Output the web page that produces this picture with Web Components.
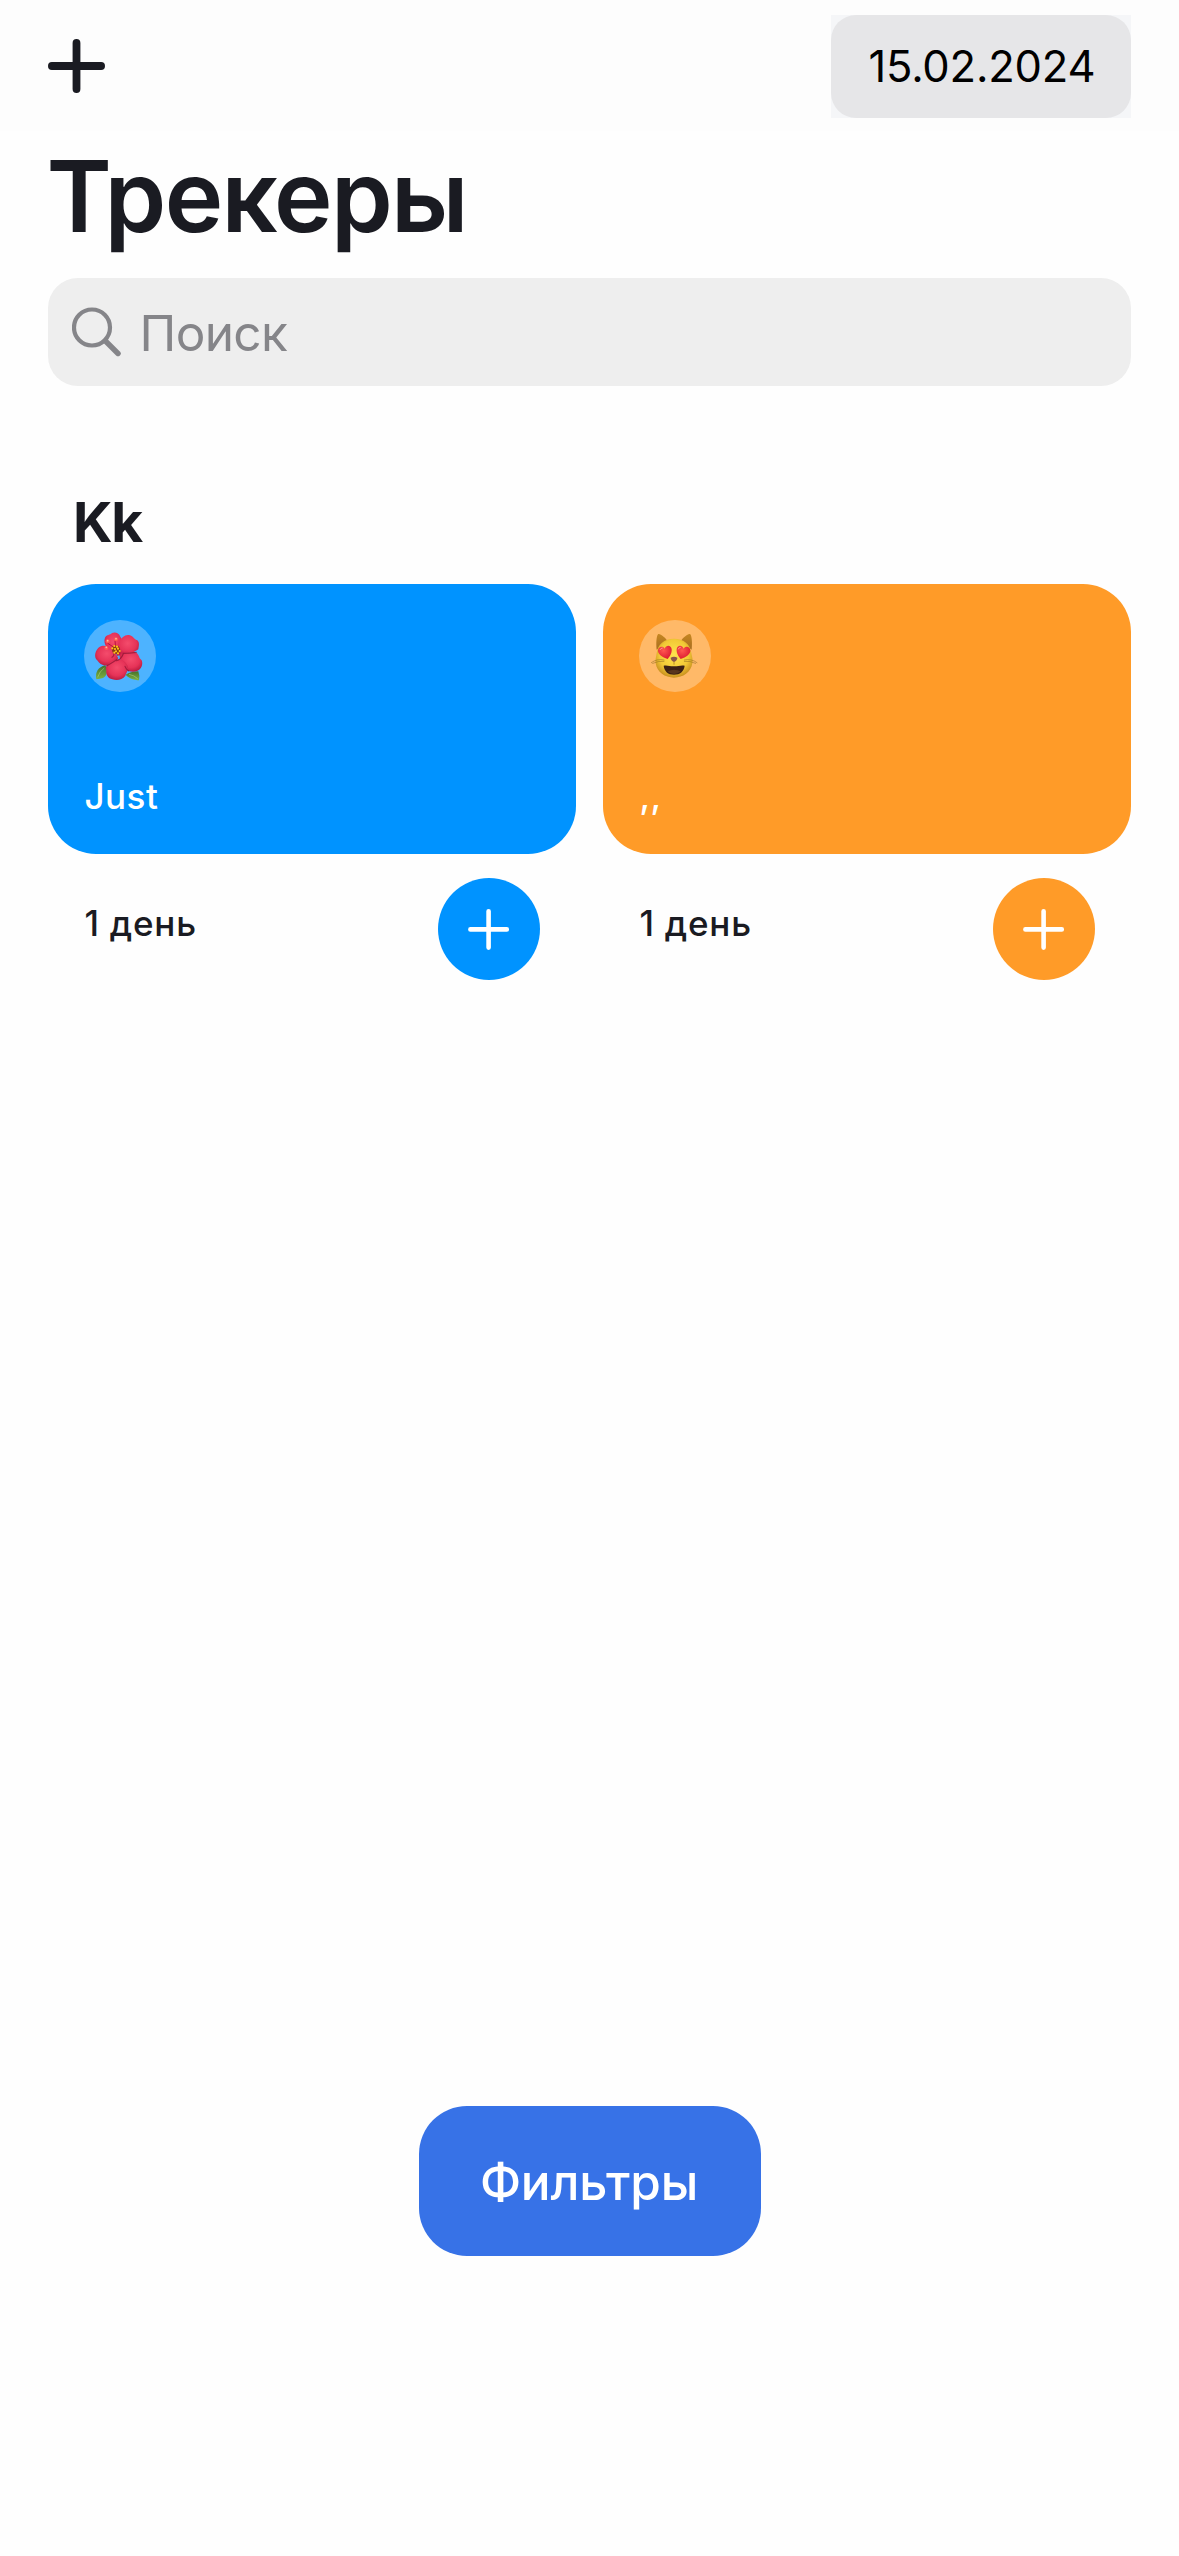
<!DOCTYPE html>
<html lang="ru">
<head>
<meta charset="utf-8">
<title>Трекеры</title>
<style>
html, body { margin: 0; background: #fefefe; }
body { font-family: Inter, "Noto Sans", sans-serif; color: #1a1b22; }
</style>
</head>
<body>
<tracker-app></tracker-app>
<script>
const define = (name, html) => customElements.define(name, class extends HTMLElement {
  constructor() {
    super();
    this.attachShadow({ mode: 'open' }).innerHTML = html;
  }
});

define('nav-bar', `
<style>
:host { display: flex; justify-content: space-between; align-items: flex-start; box-sizing: border-box; height: 131px; padding: 15px 48px 0; background: #fdfdfd; }
svg { display: block; margin-top: 24px; }
.date { background: #f5f6f8; }
.pill { display: flex; align-items: center; justify-content: center; box-sizing: border-box; width: 300px; height: 103px; padding: 0 0 1px 2px; border-radius: 25px; background: #e6e6e8; color: #000; font-size: 43.5px; letter-spacing: -.2px; }
</style>
<svg width="57" height="54" viewBox="0 0 57 54" fill="none" stroke="#1a1b22" stroke-width="7.8" stroke-linecap="round"><path d="M3.9 27H53.1M28.5 3.9V50.1"/></svg>
<div class="date"><div class="pill"><slot></slot></div></div>`);

define('search-field', `
<style>
:host { display: flex; align-items: center; box-sizing: border-box; height: 108px; margin: 22px 48px 0; padding-left: 24px; border-radius: 30px; background: #eeeeee; color: #858589; font-size: 49.5px; letter-spacing: -.65px; }
svg { display: block; margin-right: 18.5px; }
span { padding-top: 1px; }
</style>
<svg width="49" height="50" viewBox="0 0 49 50" fill="none" stroke="#858589" stroke-linecap="round"><circle cx="20" cy="20.5" r="18" stroke-width="4.2"/><path d="M33.5 34L46 46.5" stroke-width="5.4"/></svg>
<span><slot></slot></span>`);

define('emoji-hibiscus', `
<style>:host, svg { display: block; width: 72px; height: 72px; }</style>
<svg viewBox="27 30 216 216" role="img">
<defs>
<radialGradient id="p" cx=".5" cy=".4" r=".6"><stop offset="0" stop-color="#f44c6c"/><stop offset=".65" stop-color="#e63358"/><stop offset="1" stop-color="#bd1c40"/></radialGradient>
<linearGradient id="l" x1="0" y1="0" x2="0" y2="1"><stop offset="0" stop-color="#47702b"/><stop offset="1" stop-color="#7cb342"/></linearGradient>
</defs>
<path d="M64 208C60 187 69 171 91 166C99 181 96 199 84 204Q74 206 64 208Z" fill="url(#l)"/>
<path d="M68 202Q73 184 88 174" fill="none" stroke="#a6ca75" stroke-width="2"/>
<path d="M152 194C164 186 178 184 190 184Q195 198 192 211C178 209 163 207 152 194Z" fill="url(#l)"/>
<path d="M162 193Q178 196 188 206" fill="none" stroke="#a6ca75" stroke-width="2"/>
<path d="M120 136C98 121 83 101 90 83C96 73 105 76 111 69C121 65 131 69 136 80C146 92 142 118 120 136Z" fill="url(#p)"/>
<path d="M125 138C122 106 137 76 159 75C171 73 175 86 187 91C195 98 191 110 190 118C176 130 148 133 125 138Z" fill="url(#p)"/>
<path d="M130 144C114 167 96 170 82 164C73 161 69 153 63 147C56 134 64 113 80 108C96 104 114 117 130 144Z" fill="url(#p)"/>
<path d="M133 134C149 121 173 120 186 130C194 139 191 143 200 151C205 162 199 179 186 183C174 188 158 184 149 177C141 162 134 150 133 134Z" fill="url(#p)"/>
<path d="M127 148C140 147 151 154 157 166C163 177 155 187 151 197C142 209 127 213 112 208C99 206 92 194 94 181C87 167 106 153 127 148Z" fill="url(#p)"/>
<path d="M124 152Q138 149 145 131M144 130Q164 130 184 127M96 167Q113 157 125 149M150 169Q153 178 161 183M116 125Q119 138 111 142" fill="none" stroke="#780d2c" stroke-width="3.5" stroke-linecap="round" opacity=".6"/>
<path d="M97 99L118 113M120 92L122 114" stroke="#b9163a" stroke-width="3"/>
<g fill="#ff5a50"><circle cx="98" cy="94" r="6"/><circle cx="123" cy="88" r="6"/><circle cx="94" cy="114" r="6"/></g>
<g fill="#ffb7a0"><circle cx="98" cy="92" r="2.6"/><circle cx="123" cy="86" r="2.6"/><circle cx="94" cy="112" r="2.6"/></g>
<ellipse cx="123" cy="119" rx="12" ry="12" fill="#8a3914"/>
<g fill="#ffc21a"><circle cx="118" cy="108" r="3.2"/><circle cx="126" cy="110" r="3.2"/><circle cx="112" cy="115" r="3.2"/><circle cx="120" cy="117" r="3.2"/><circle cx="129" cy="116" r="3.2"/><circle cx="134" cy="123" r="3.2"/><circle cx="123" cy="124" r="3.2"/><circle cx="118" cy="128" r="3.2"/><circle cx="129" cy="130" r="3.2"/></g>
</svg>`);

define('emoji-cat', `
<style>:host, svg { display: block; width: 72px; height: 72px; }</style>
<svg viewBox="27 30 216 216" role="img">
<defs>
<radialGradient id="f" cx=".5" cy=".42" r=".6"><stop offset="0" stop-color="#ffe44d"/><stop offset=".65" stop-color="#f2c936"/><stop offset="1" stop-color="#c58b1d"/></radialGradient>
<linearGradient id="e" x1="0" y1="0" x2="0" y2="1"><stop offset="0" stop-color="#c68721"/><stop offset="1" stop-color="#a86d20"/></linearGradient>
<radialGradient id="h" cx=".4" cy=".35" r=".7"><stop offset="0" stop-color="#ff5750"/><stop offset="1" stop-color="#db1830"/></radialGradient>
</defs>
<path d="M80 119C78 100 79 80 84 73C88 67 105 82 114 94Z" fill="url(#e)"/>
<path d="M185 119C187 100 186 80 181 73C177 67 160 82 151 94Z" fill="url(#e)"/>
<path d="M132 86C162 86 181 103 184 130C187 143 189 151 187 160C183 187 159 203 132 203C105 203 81 187 77 160C75 151 78 143 80 130C83 103 102 86 132 86Z" fill="url(#f)"/>
<g fill="none" stroke="#8a671f" stroke-width="2" stroke-linecap="round" opacity=".75"><path d="M64 158Q81 145 102 150M68 160Q85 152 102 154M201 158Q184 145 163 150M197 160Q180 152 163 154"/></g>
<path d="M113 147C97 142 83 133 84 121C85 109 99 106 104 116C110 102 124 107 125 118C126 131 119 140 113 147Z" fill="url(#h)"/>
<path d="M152 147C168 142 182 133 181 121C180 109 166 106 161 116C155 102 141 107 140 118C139 131 146 140 152 147Z" fill="url(#h)"/>
<g fill="none" stroke="#ff9a86" stroke-width="3" stroke-linecap="round"><path d="M90 119Q92 114 97 114M145 117Q146 112 151 112"/></g>
<path d="M122 143Q132 138 142 143Q142 151 132 156Q122 151 122 143Z" fill="#8b5748"/>
<path d="M132 155V164" stroke="#a16d1c" stroke-width="2"/>
<path d="M101 167C111 164 122 170 132 169C142 170 153 164 164 167C162 184 150 194 132 194C114 194 103 184 101 167Z" fill="#3c2114"/>
<path d="M113 184Q132 175 152 184Q144 192 132 192Q120 192 113 184Z" fill="#59351d"/>
</svg>`);

define('tracker-card', `
<style>
:host { display: block; flex: 1; font-size: 35px; font-weight: 500; line-height: 42px; }
.card { box-sizing: border-box; height: 270px; padding: 36px; border-radius: 48px; background: var(--tint); color: #fff; }
.emoji { width: 72px; height: 72px; border-radius: 50%; background: rgba(255,255,255,.3); }
.name { margin-top: 83px; padding-left: .5px; letter-spacing: .45px; }
.foot { display: flex; justify-content: space-between; padding: 24px 36px; }
.count { margin-top: 24px; padding-left: .5px; letter-spacing: .75px; }
.add { display: flex; width: 102px; height: 102px; border-radius: 50%; background: var(--tint); }
</style>
<div class="card"><div class="emoji"><slot name="emoji"></slot></div><div class="name"><slot name="name"></slot></div></div>
<div class="foot"><div class="count"><slot name="count"></slot></div>
<div class="add"><svg width="102" height="102" viewBox="0 0 102 102" fill="none" stroke="#fff" stroke-width="4.6" stroke-linecap="round"><path d="M32.4 51.4H68.8M50.6 33.2V69.6"/></svg></div></div>`);

define('tracker-section', `
<style>
:host { display: block; padding: 102px 48px 0; }
h2 { margin: 0 0 28px; padding-left: 25px; font-size: 55px; font-weight: 700; line-height: 68px; letter-spacing: -1.2px; }
.row { display: flex; gap: 27px; }
</style>
<h2><slot name="title"></slot></h2><div class="row"><slot></slot></div>`);

define('filter-button', `
<style>
:host { display: flex; align-items: center; justify-content: center; box-sizing: border-box; width: 342px; height: 150px; margin: auto auto 300px; padding: 2px 1px 0 0; border-radius: 48px; background: #3772e7; color: #fff; font-size: 49.5px; font-weight: 500; letter-spacing: -.2px; }
</style>
<slot></slot>`);

define('tracker-app', `
<style>
:host { display: flex; flex-direction: column; width: 1179px; height: 2556px; overflow: hidden; }
h1 { margin: 5px 0 0 46.5px; font-size: 99px; font-weight: 600; line-height: 120px; letter-spacing: -1.65px; }
</style>
<nav-bar>15.02.2024</nav-bar>
<h1>Трекеры</h1>
<search-field>Поиск</search-field>
<tracker-section>
  <span slot="title">Kk</span>
  <tracker-card style="--tint:#0093ff"><emoji-hibiscus slot="emoji"></emoji-hibiscus><span slot="name">Just</span><span slot="count">1 день</span></tracker-card>
  <tracker-card style="--tint:#ff9b28"><emoji-cat slot="emoji"></emoji-cat><span slot="name">,,</span><span slot="count">1 день</span></tracker-card>
</tracker-section>
<filter-button>Фильтры</filter-button>`);
</script>
</body>
</html>
